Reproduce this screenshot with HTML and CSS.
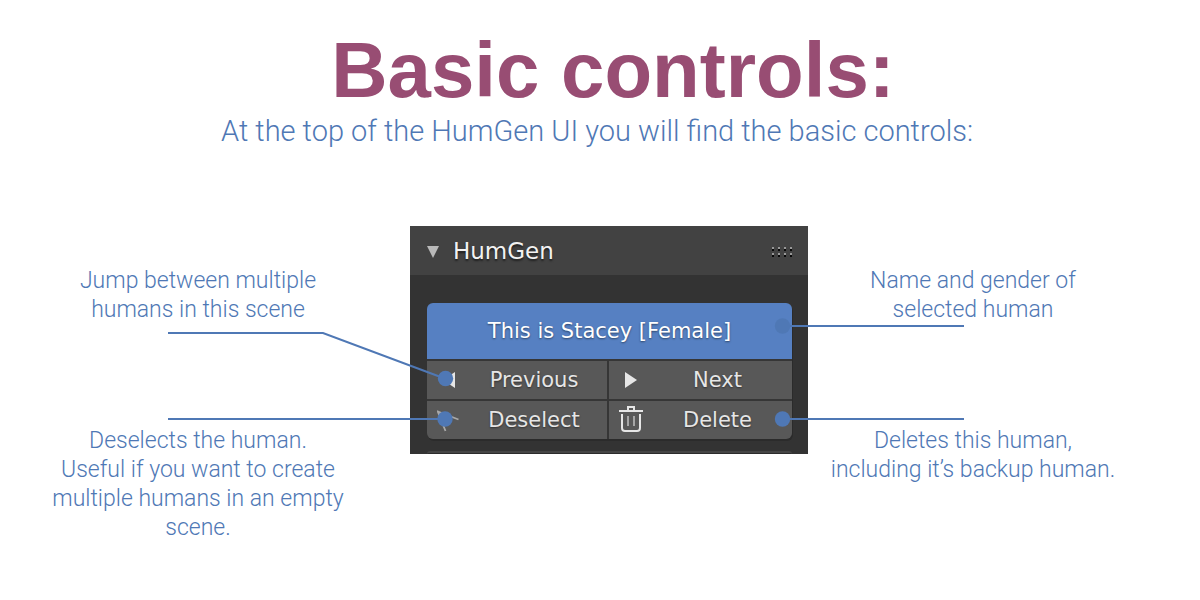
FILE: index.html
```html
<!DOCTYPE html>
<html lang="en">
<head>
<meta charset="utf-8">
<meta name="viewport" content="width=device-width, initial-scale=1">
<title>Basic controls</title>
<link rel="stylesheet" href="styles.css">
</head>
<body>
<main class="page">
  <header class="intro">
    <h1 class="title">Basic controls:</h1>
    <p class="subtitle">At the top of the HumGen UI you will find the basic controls:</p>
  </header>
  <div class="figure">
    <div class="notes notes-left">
      <p class="note">Jump between multiple humans in this scene</p>
      <p class="note">Deselects the human.<br>Useful if you want to create multiple humans in an empty scene.</p>
    </div>
    <section class="panel" aria-labelledby="panel-title">
      <div class="panel-head">
        <svg class="collapse" width="12" height="12" viewBox="0 0 12 12" aria-hidden="true"><path d="M0 0H12L6 12Z" fill="#b9b9b9"/></svg>
        <h2 class="panel-title" id="panel-title">HumGen</h2>
        <svg class="grip" width="22" height="12" viewBox="0 0 22 12" aria-hidden="true">
          <path d="M1 2h2m4 0h2m4 0h2m4 0h2M1 8h2m4 0h2m4 0h2m4 0h2" stroke="#999" stroke-width="2"/>
          <path d="M1 4h2m4 0h2m4 0h2m4 0h2M1 10h2m4 0h2m4 0h2m4 0h2" stroke="#080808" stroke-width="2"/>
        </svg>
      </div>
      <div class="panel-body">
        <div class="controls">
          <button class="control control-name" type="button">This is Stacey [Female]</button>
          <button class="control" type="button">
            <svg class="icon" viewBox="0 0 24 24" aria-hidden="true"><path d="M18 4V20L6 12Z" fill="#e6e6e6"/></svg>
            <span class="label">Previous</span>
          </button>
          <button class="control" type="button">
            <svg class="icon" viewBox="0 0 24 24" aria-hidden="true"><path d="M6 4V20L18 12Z" fill="#e6e6e6"/></svg>
            <span class="label">Next</span>
          </button>
          <button class="control" type="button">
            <svg class="icon" viewBox="0 0 24 24" aria-hidden="true"><path d="M8.500 23L0.800 3.500L21.500 11.500M0.800 3.500L12 15" fill="none" stroke="#a8a8a8" stroke-width="1.800"/></svg>
            <span class="label">Deselect</span>
          </button>
          <button class="control" type="button">
            <svg class="icon" viewBox="0 1 24 28" aria-hidden="true">
              <path d="M0 6H24M9 5V2H15V5M3 9V23Q3 26 6 26H18Q21 26 21 23V9" fill="none" stroke="#e6e6e6" stroke-width="2"/>
              <path d="M9 11V21M15 11V21" stroke="#a6a6a6" stroke-width="2"/>
            </svg>
            <span class="label">Delete</span>
          </button>
        </div>
        <div class="next-box"></div>
      </div>
      <svg class="leaders" aria-hidden="true">
        <g fill="none" stroke="#4f78b5" stroke-width="2">
          <path d="M-242 107H-87L36 153"/>
          <path d="M-242 193H35"/>
          <path d="M373 100H554"/>
          <path d="M373 193H554"/>
        </g>
        <g fill="#4f78b5">
          <circle cx="35.500" cy="152.500" r="7.700"/>
          <circle cx="35" cy="193" r="7.700"/>
          <circle cx="372.500" cy="100" r="7.700"/>
          <circle cx="372.500" cy="193" r="7.700"/>
        </g>
      </svg>
    </section>
    <div class="notes notes-right">
      <p class="note">Name and gender of<br>selected human</p>
      <p class="note">Deletes this human,<br>including it’s backup human.</p>
    </div>
  </div>
</main>
</body>
</html>
```
FILE: styles.css
```css
* { box-sizing: border-box; }
body {
  margin: 0;
  background: #fff;
  color: #4f78b5;
  font-family: Roboto, "Liberation Sans", sans-serif;
  font-weight: 300;
}
h1, h2, p { margin: 0; }
.page { padding-top: 26px; }
.intro { text-align: center; }
.title {
  padding-left: 26px;
  font: bold 78px/88px "Liberation Sans", Arial, sans-serif;
  color: #984d73;
}
.subtitle {
  padding-right: 6px;
  font-size: 29px;
  line-height: 34px;
}
.figure {
  display: grid;
  grid-template-columns: minmax(0, 1fr) 398px minmax(0, 1fr);
  align-items: start;
  margin-top: 78px;
  padding-left: 18px;
}
.notes {
  display: flex;
  flex-direction: column;
  gap: 102px;
  width: 300px;
  padding-top: 40px;
  text-align: center;
  font-size: 23px;
  line-height: 29px;
}
.notes-left { justify-self: end; margin-right: 62px; }
.notes-right { margin-left: 15px; }
.note { padding: 0 2px; }
.panel {
  position: relative;
  background: #333;
  color: #e8e8e8;
  font-family: "DejaVu Sans", sans-serif;
  font-weight: 400;
}
.panel-head {
  display: flex;
  align-items: center;
  gap: 14px;
  padding: 11px 15px 9px 17px;
  background: #424242;
}
.panel-title {
  flex: 1;
  font-size: 23px;
  font-weight: 400;
  line-height: 29px;
  color: #f2f2f2;
  text-shadow: 0 2px 2px #0008;
}
.panel-body { padding: 28px 16px 0 17px; }
.controls {
  display: grid;
  grid-template-columns: 180px 1fr;
  gap: 2px;
  overflow: hidden;
  border-radius: 6px;
  background: #363636;
  box-shadow: 1px 2px 0 #2b2b2b;
}
.control {
  display: flex;
  align-items: center;
  height: 38px;
  padding: 0 0 0 10px;
  border: 0;
  background: #585858;
  color: #e6e6e6;
  font: 21px/26px "DejaVu Sans", sans-serif;
  text-shadow: 0 1px 2px #0007;
}
.control-name {
  grid-column: 1 / -1;
  justify-content: center;
  height: 56px;
  padding: 0;
  background: #5680c2;
  color: #fff;
}
.icon { flex: none; width: 24px; height: 28px; }
.label { flex: 1; text-align: center; }
.next-box {
  height: 3px;
  margin-top: 12px;
  border-top: 2px solid #454545;
  border-radius: 6px 6px 0 0;
  background: #2b2b2b;
}
.leaders {
  position: absolute;
  inset: 0;
  width: 100%;
  height: 100%;
  overflow: visible;
  pointer-events: none;
}
```
